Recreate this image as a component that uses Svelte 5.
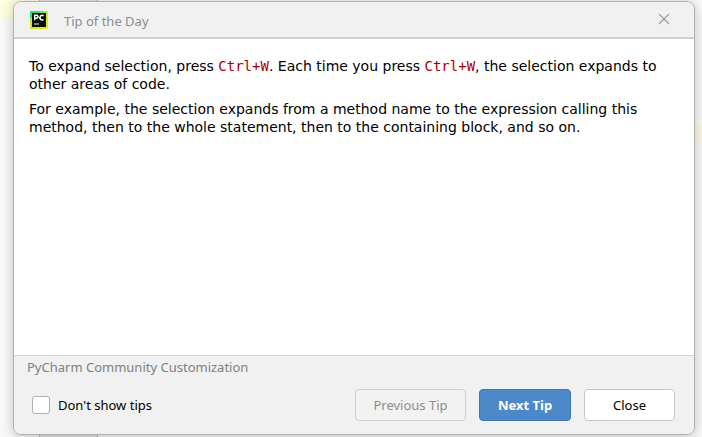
<script>
  let hideTips = $state(false);
</script>

<div class="desktop">
  <div class="editor" aria-hidden="true">
    <div class="line-top"></div>
    <div class="tab tab-top"></div>
    <div class="line-right"></div>
    <div class="tab tab-bottom"></div>
  </div>

  <div class="dialog" role="dialog" aria-labelledby="dialog-title">
    <header>
      <svg class="logo" width="18" height="18" viewBox="0 0 18 18" aria-hidden="true">
        <defs>
          <linearGradient id="edge" x1="0" y1="0" x2="1" y2="1">
            <stop offset="0" stop-color="#10e08c" />
            <stop offset="0.28" stop-color="#3be254" />
            <stop offset="0.5" stop-color="#cdea2c" />
            <stop offset="1" stop-color="#eee61c" />
          </linearGradient>
        </defs>
        <rect width="18" height="18" fill="url(#edge)" />
        <path d="M0 8 3 5v11h12l-2 2H0z" fill="#d5e51f" />
        <rect x="2" y="2" width="14" height="14" fill="#071109" />
        <path d="M4.7 9.2V4.2h1.8a1.5 1.5 0 0 1 0 3H4.7M13.6 4.8a2.3 2.3 0 1 0 0 3.7" fill="none" stroke="#fff" stroke-width="1.5" />
        <path d="M4 13h5" stroke="#e4e8e4" stroke-width="1.2" />
      </svg>
      <h1 id="dialog-title">Tip of the Day</h1>
      <button class="dismiss" type="button" aria-label="Close dialog">
        <svg width="12" height="12" viewBox="0 0 12 12" aria-hidden="true">
          <path d="M1 1l10 10M11 1 1 11" stroke="#999" stroke-width="1.1" />
        </svg>
      </button>
    </header>

    <main>
      <p>To expand selection, press <kbd>Ctrl+W</kbd>. Each time you press <kbd>Ctrl+W</kbd>, the selection expands to other areas of code.</p>
      <p>For example, the selection expands from a method name to the expression calling this method, then to the whole statement, then to the containing block, and so on.</p>
    </main>

    <footer>
      <div class="source">PyCharm Community Customization</div>
      <div class="controls">
        <label><input type="checkbox" bind:checked={hideTips} />Don't show tips</label>
        <div class="buttons">
          <button class="wide" type="button" disabled>Previous Tip</button>
          <button class="primary" type="button">Next Tip</button>
          <button type="button">Close</button>
        </div>
      </div>
    </footer>
  </div>
</div>

<style>
  .desktop {
    position: relative;
    box-sizing: border-box;
    display: flex;
    min-height: 100vh;
    padding: 1px 7px 2px 13px;
    overflow: hidden;
    background: #fafafa;
    font-family: "Noto Sans", "Open Sans", sans-serif;
    font-size: 13px;
    color: #000;
  }
  .editor {
    position: absolute;
    inset: 0;
  }
  .editor div {
    position: absolute;
  }
  .line-top {
    top: 0;
    left: 0;
    width: 39px;
    height: 19px;
    background: #ffffe0;
  }
  .line-right {
    top: 123px;
    right: 0;
    width: 40px;
    height: 22px;
    background: #fcfae6;
  }
  .tab {
    left: 39px;
    width: 57px;
    height: 4px;
    border: solid #bbb;
    border-width: 0 1px;
    background: #e4e4e4;
  }
  .tab-top {
    top: 0;
  }
  .tab-bottom {
    bottom: 0;
  }
  .dialog {
    position: relative;
    flex: 1;
    min-width: 0;
    display: flex;
    flex-direction: column;
    border: 1px solid #b0b0b0;
    border-radius: 8px;
    overflow: hidden;
    background: #fff;
    box-shadow: 0 2px 14px rgba(0, 0, 0, 0.24);
  }
  header {
    display: flex;
    align-items: center;
    height: 35px;
    padding: 0 24px 0 16px;
    border-bottom: 2px solid #cecece;
    background: #f1f1f1;
  }
  h1 {
    flex: 1;
    margin: 0 0 0 16px;
    padding-top: 3px;
    font-size: 13px;
    font-weight: 400;
    line-height: 18px;
    color: #8c8c8c;
  }
  .dismiss {
    display: flex;
    min-width: 0;
    height: 14px;
    padding: 0 0 2px;
    border: 0;
    background: none;
  }
  main {
    flex: 1;
    padding: 18px 15px;
    font-family: "DejaVu Sans", Verdana, sans-serif;
    font-size: 14px;
    line-height: 18px;
  }
  p {
    margin: 0 0 7px;
  }
  kbd {
    font-family: "DejaVu Sans Mono", monospace;
    font-size: 14px;
    line-height: 1;
    color: #a80000;
  }
  footer {
    padding: 2px 19px 13px 13px;
    border-top: 1px solid #d4d4d4;
    background: #f1f1f1;
  }
  .source {
    line-height: 18px;
    color: #808080;
  }
  .controls {
    display: flex;
    align-items: center;
    justify-content: space-between;
    margin-top: 13px;
  }
  label {
    display: flex;
    align-items: center;
    gap: 8px;
    padding: 0 0 1px 5px;
  }
  input {
    box-sizing: border-box;
    appearance: none;
    width: 18px;
    height: 18px;
    margin: 0;
    border: 1px solid #b0b0b0;
    border-radius: 3px;
    background: #fff;
  }
  input:checked {
    background: #4a88c7;
  }
  .buttons {
    display: flex;
    gap: 13px;
  }
  button {
    min-width: 91px;
    height: 32px;
    padding: 0;
    border: 1px solid #c6c6c6;
    border-radius: 4px;
    background: #fff;
    font: inherit;
    color: #000;
  }
  .wide {
    min-width: 111px;
  }
  button:disabled {
    border-color: #d0d0d0;
    background: #f2f2f2;
    color: #8c8c8c;
  }
  .primary {
    min-width: 92px;
    border-color: #3d75b3;
    background: #4d89c9;
    font-weight: 700;
    color: #fff;
  }
</style>
